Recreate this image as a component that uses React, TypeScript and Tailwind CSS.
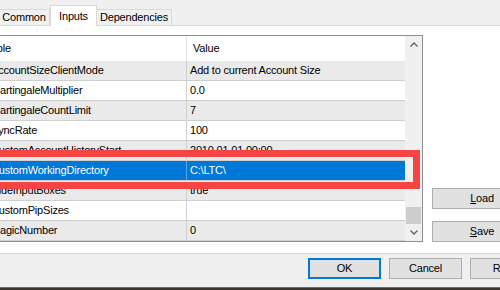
import React from 'react';

type Row = { name: string; value: string; selected?: boolean };

const rows: Row[] = [
  { name: 'AccountSizeClientMode', value: 'Add to current Account Size' },
  { name: 'MartingaleMultiplier', value: '0.0' },
  { name: 'MartingaleCountLimit', value: '7' },
  { name: 'SyncRate', value: '100' },
  { name: 'CustomAccountHistoryStart', value: '2010.01.01 00:00' },
  { name: 'CustomWorkingDirectory', value: 'C:\\LTC\\', selected: true },
  { name: 'HideInputBoxes', value: 'true' },
  { name: 'CustomPipSizes', value: '' },
  { name: 'MagicNumber', value: '0' },
];

const Chevron: React.FC<{ down?: boolean }> = ({ down }) => (
  <svg width="8" height="5" viewBox="0 0 8 5">
    <polyline
      points={down ? '0.5,0.5 4,4 7.5,0.5' : '0.5,4.5 4,1 7.5,4.5'}
      fill="none"
      stroke="#606060"
      strokeWidth="1.3"
    />
  </svg>
);

const Button: React.FC<{ children: React.ReactNode; width: string; primary?: boolean }> = ({
  children,
  width,
  primary,
}) => (
  <div
    className={`${width} h-[21px] shrink-0 flex items-center justify-center bg-[#e1e1e1] ${
      primary ? 'border-2 border-[#0078d7]' : 'border border-[#adadad]'
    }`}
  >
    {children}
  </div>
);

export default function App() {
  return (
    <div className="relative w-[500px] h-[290px] overflow-hidden bg-[#f0f0f0] text-[11px] tracking-[-0.2px] text-black font-['Liberation_Sans',Arial,sans-serif]">
      {/* Tabs */}
      <div className="flex items-end h-[25px] -ml-[2px]">
        <div className="w-[52px] h-[16px] flex items-center justify-center border border-b-0 border-[#d9d9d9] bg-[#f0f0f0]">
          Common
        </div>
        <div className="relative z-10 w-[47px] h-[21px] -mb-[1px] flex items-center justify-center border border-b-0 border-[#d9d9d9] bg-white">
          Inputs
        </div>
        <div className="w-[75px] h-[16px] flex items-center justify-center border border-l-0 border-b-0 border-[#d9d9d9] bg-[#f0f0f0]">
          Dependencies
        </div>
      </div>

      {/* Tab page */}
      <div className="-ml-[40px] w-[640px] h-[229px] flex bg-white border-y border-[#d9d9d9]">
        {/* Property grid */}
        <div className="mt-[9px] w-[463px] h-[207px] flex border border-[#8f8f8f]">
          <div className="w-[444px] flex flex-col">
            <div className="h-[25px] flex bg-white">
              <div className="w-[226px] pl-[12px] flex items-center border-r border-[#e5e5e5]">Variable</div>
              <div className="flex-1 pl-[6px] flex items-center">Value</div>
            </div>
            {rows.map((r, i) => (
              <div
                key={r.name}
                className={`h-[20px] flex border-b border-[#cfcfcf] ${
                  r.selected ? 'bg-[#0078d7] text-white' : i % 2 === 0 ? 'bg-[#eaeaea]' : 'bg-white'
                }`}
              >
                <div
                  className={`w-[226px] pl-[30px] flex items-center whitespace-nowrap overflow-hidden border-r ${
                    r.selected ? 'border-[#5aa3e0]' : 'border-[#cfcfcf]'
                  }`}
                >
                  {r.name}
                </div>
                <div className="flex-1 pl-[3px] flex items-center whitespace-nowrap">{r.value}</div>
              </div>
            ))}
          </div>
          {/* Scrollbar */}
          <div className="w-[17px] flex flex-col bg-[#f0f0f0]">
            <div className="h-[17px] flex items-center justify-center">
              <Chevron />
            </div>
            <div className="flex-1" />
            <div className="h-[17px] mx-[1px] bg-[#cdcdcd]" />
            <div className="h-[17px] flex items-center justify-center">
              <Chevron down />
            </div>
          </div>
        </div>

        {/* Load / Save */}
        <div className="ml-[9px] pt-[162px] flex flex-col gap-[12px]">
          <Button width="w-[100px]">
            <span>
              <span className="underline">L</span>oad
            </span>
          </Button>
          <Button width="w-[100px]">
            <span>
              <span className="underline">S</span>ave
            </span>
          </Button>
        </div>
      </div>

      {/* Footer buttons */}
      <div className="h-[33px] pt-[4px] pl-[308px] flex gap-[8px]">
        <Button width="w-[73px]" primary>
          OK
        </Button>
        <Button width="w-[73px]">Cancel</Button>
        <Button width="w-[73px]">Reset</Button>
      </div>
      <div className="h-[3px] bg-[#3b3530] border-t border-[#6b6b6b]" />

      {/* Red highlight overlay */}
      <div className="absolute left-[-10px] top-[150px] w-[430px] h-[39px] border-[7px] border-[#f54444] pointer-events-none" />
    </div>
  );
}
